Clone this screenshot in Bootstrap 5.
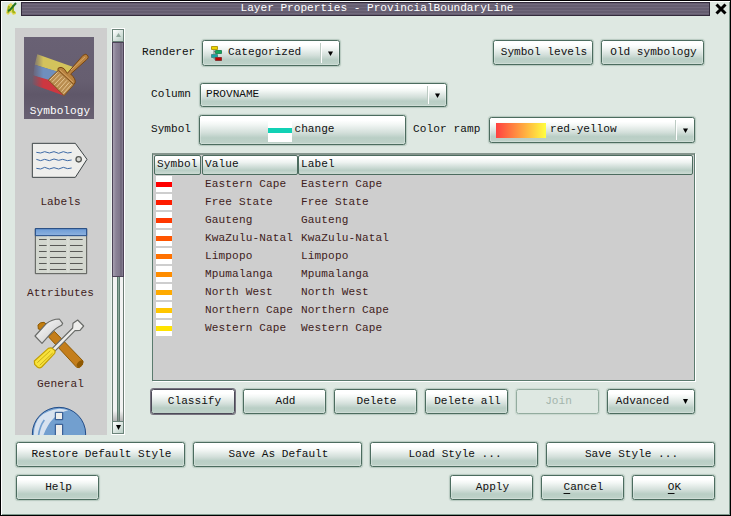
<!DOCTYPE html>
<html lang="en">
<head>
<meta charset="utf-8">
<title>Layer Properties - ProvincialBoundaryLine</title>
<link href="https://cdn.jsdelivr.net/npm/bootstrap@5.3.0/dist/css/bootstrap.min.css" rel="stylesheet">
<style>
body{width:731px;height:516px;overflow:hidden;background:#dee8e2;font:11.1px/14px "Liberation Mono",monospace;color:#101010;white-space:nowrap}
.win{width:731px;height:516px;border:1px solid #000;box-shadow:inset 1px 1px #fff,inset -1px -1px #809b8e}
.titlebar{height:16px;padding:1px 3px 0 4px}
.caption{flex:1;height:14px;margin:0 5px 0 2px;border:1px solid #322a3b;background:repeating-linear-gradient(#655d70 0 1px,#71697c 1px 2px,#655d70 2px 3px);color:#fff;text-align:center;line-height:11px;padding-left:23px}
.main-area{height:407px;margin-top:11px;padding-left:14px}
.side{width:92px;height:407px;background:#cecece;padding:9px 9px 0;gap:9px}
.side-item{flex:none;width:70px;height:82px;color:#401c20;text-align:center}
.side-item svg{display:block;width:70px;height:67px;overflow:hidden}
.side-item.active{background:linear-gradient(#696174,#665e70 55%,#5f5769 70%,#686072);color:#fff}
.side-item span{display:block;width:90px;margin-left:-9px;letter-spacing:.05px}
.side-item:not(.active) span{padding-left:1px}
.scroller{width:14px;height:407px;margin-left:4px;border:1px solid #fff;border-left-color:#eef4f0}
.scroll-btn{width:12px;height:13px;flex:none;border:1px solid #6b8379;background:linear-gradient(135deg,#fff,#b9cec5)}
.scroll-btn svg{display:block;margin:auto}
.thumb{height:235px;flex:none;border:1px solid #4c4357;background:linear-gradient(90deg,#a79fb1,#8b8397 30%,#81788d 65%,#6b6376 80%,#8b8398)}
.trough{flex:1;border:solid #6b7b74;border-width:0 1px;background:linear-gradient(transparent 93%,rgba(120,120,120,.5)),linear-gradient(90deg,#f2f2f2 4px,#5b7b6e 4px 5px,#8da79a 5px 6px,#5b7b6e 6px 7px,#f2f2f2 7px)}
.panel{margin-left:17px;width:575px}
.qbtn,.qbtn:hover{font:inherit;color:#101010;height:25px;padding:0;border:1px solid #4c6c5f;border-radius:2.5px;background:linear-gradient(#fff 0,#fff 15%,#f3f7f5 30%,#d3dfda 60%,#b9cec5 78%,#bfd2c9 100%);box-shadow:0 0 1px 1px rgba(90,125,110,.3),inset 0 0 0 1px rgba(255,255,255,.25);display:flex;align-items:center;justify-content:center;flex:none}
.qbtn>span{margin:-2px 0 0 2px}
.w83{width:83px}
.w169{width:169px}
.qbtn.w169:nth-child(3){width:168px}
.qbtn.focus-btn{width:84px;border-color:#4c4a58;box-shadow:0 0 0 1px #77737f}
.qbtn.focus-btn>span{margin-left:3px}
.qbtn.off{background:none;color:#a3b5ac;border-color:#93ac9f;opacity:1;box-shadow:0 0 1px 1px rgba(90,125,110,.15)}
.combo,.combo:hover{justify-content:flex-start}
.arrow{width:18px;height:calc(100% - 4px);border-left:1px solid #fff;box-shadow:-1px 0 #bccbc3;margin-left:auto;display:flex;align-items:center;justify-content:center}
.r1{height:26px;margin-top:12px}
.r2{height:24px;margin-top:17px;padding-left:9px}
.r3{height:30px;margin-top:8px;padding-left:9px}
.grid-box{width:543px;height:228px;margin:8px 0 0 10px;border:1px solid #5b7b6e;border-top:2px solid #85958d;background:#cecece;box-shadow:1px 1px #fff;color:#401c20}
.heads{color:#101010;height:20px;padding:0 1px}
.th-cell{height:20px;border:1px solid #4c6c5f;border-radius:2px;background:linear-gradient(#fff 10%,#eef3f1 35%,#b9cec5 80%,#cddbd4);padding-left:2px;line-height:16px;letter-spacing:.1px}
.line-row{height:18px;letter-spacing:.12px}
.swatch{width:16px;height:16px;margin:1px 33px 0 2px;background:linear-gradient(#fff 6px,var(--c) 6px 11px,#fff 11px)}
.swatch{margin-left:3px}
.line-row .val{width:96px;line-height:18px}
.actions{margin:8px 0 0 9px}
.foot{padding-left:15px;gap:8px}
u{text-underline-offset:3px}
</style>
<script src="https://cdn.jsdelivr.net/npm/bootstrap@5.3.0/dist/js/bootstrap.bundle.min.js"></script>
</head>
<body>
<div class="win">
<header class="titlebar d-flex">
<svg width="14" height="14" viewBox="0 0 14 14"><path d="M1 11L3 3L6 1L8 3L6 7L11 10V12L8 13L6 10L3 13Z" fill="#e5d957"/><path d="M3 11L4 4M8 3V9Q8 11 10 10" stroke="#9eb51e" stroke-width="2" fill="none"/><path d="M3 9L5 8L11 1" stroke="#267626" stroke-width="2" fill="none"/></svg>
<div class="caption">Layer Properties - ProvincialBoundaryLine</div>
<svg width="12" height="14" viewBox="0 0 12 14"><path d="M1.500 2.500L10.500 11.500M10.500 2.500L1.500 11.500" stroke="#000" stroke-width="3"/></svg>
</header>

<main class="main-area d-flex">
<nav class="side d-flex flex-column overflow-hidden">
<div class="side-item active">
<svg viewBox="0 0 70 67"><defs><linearGradient id="fade"><stop offset="0" stop-color="#fff" stop-opacity="0"/><stop offset=".25" stop-color="#fff"/></linearGradient><mask id="fm"><rect x="95" y="150" width="140" height="150" fill="url(#fade)"/></mask></defs>
<g transform="translate(-24 -37) scale(.33333)"><g mask="url(#fm)"><path d="M112 163L218 200L200 224L104 194Z" fill="#d3c35c"/><path d="M104 194L185 218L150 245L100 226Z" fill="#6f8fbd"/><path d="M98 226L148 240L193 287L96 253Z" fill="#cd3740"/></g>
<path d="M175 204Q183 199 192 206L202 220L249 166Q259 158 264 168Q267 174 260 179L212 222Q229 238 225 249Q222 256 217 253L176 215Q172 209 175 204Z" fill="#b8823f" stroke="#774513" stroke-width="3"/><path d="M175 211L222 254L192 287L145 240Z" fill="#b98d50" stroke="#80501c" stroke-width="3"/><path d="M173 217L149 241M180 223L156 247M187 229L163 254M194 235L170 261M201 241L177 268M208 247L184 275M215 253L190 281" stroke="#e6c693" stroke-width="3"/><path d="M180 210L220 247M213 210L255 171" stroke="#d7a565" stroke-width="3" fill="none"/></g></svg><span>Symbology</span></div>
<div class="side-item">
<svg viewBox="0 0 70 67"><g transform="translate(-24 -3) scale(.33333)" fill="none"><path d="M97 55H226L261 103L226 157H97Z" fill="#eeeeec" stroke="#3c4345" stroke-width="3"/><circle cx="236" cy="103" r="8" stroke="#555753" stroke-width="4" fill="#d8d8d4"/><path d="M109 82L122 84L134 80L148 84L162 80L176 85L190 80L203 84L215 82M109 103L122 107L134 103L148 107L162 102L176 106L188 103L202 107L215 105M109 130L122 132L134 127L148 132L162 128L176 132L190 127L203 131L215 129" stroke="#3c68a5" stroke-width="3" stroke-linejoin="round"/></g></svg><span>Labels</span></div>
<div class="side-item">
<svg viewBox="0 0 70 67"><defs><linearGradient id="hd" x2="0" y2="1"><stop stop-color="#6b9bd6"/><stop offset="1" stop-color="#8eb2df"/></linearGradient></defs><g transform="translate(-24 6) scale(.33333)"><path d="M106 11H260V146H106Z" fill="#d3d7cf" stroke="#555753" stroke-width="3"/><path d="M106 11H260V32H106Z" fill="url(#hd)" stroke="#204a87" stroke-width="3"/><path d="M144 34V144M204 34V144" stroke="#dfe2dc" stroke-width="3"/><path d="M117 43.500h23m10 0h48m12 0h38M117 61.500h23m10 0h48m12 0h38M117 79.500h23m10 0h48m12 0h38M117 97.500h23m10 0h48m12 0h38M117 115.500h23m10 0h48m12 0h38M117 133.500h23m10 0h48m12 0h38" stroke="#555753" stroke-width="3"/></g></svg><span>Attributes</span></div>
<div class="side-item">
<svg viewBox="0 0 70 67"><defs><linearGradient id="hm" x2="1" y2="1"><stop stop-color="#fff"/><stop offset="1" stop-color="#c4c4c4"/></linearGradient></defs><g transform="translate(-24 0) scale(.33333)" stroke-linejoin="round"><path d="M115 57L114 45Q120 36 132 37L143 46L128 60Z" fill="#c17d11" stroke="#8f5902" stroke-width="3"/><path d="M145 80L163 64L249 153Q251 166 238 173L230 172Z" fill="#c47e1b" stroke="#8f5902" stroke-width="3"/><ellipse cx="240" cy="161" rx="7" ry="12" transform="rotate(43 240 161)" fill="#8f5902"/><path d="M105 78L139 41Q156 27 178 27L188 40L185 46Q168 53 150 73L126 100Z" fill="url(#hm)" stroke="#696b68" stroke-width="3.5"/><path d="M156 116L218 54L219 40L233 30L251 48L240 61L225 62L164 124Z" fill="#eeeeec" stroke="#696b68" stroke-width="3.5"/><path d="M103 153L145 115Q155 112 159 117Q168 121 164 130L125 171Q119 176 112 171L104 163Z" fill="#f8e23b" stroke="#c4a000" stroke-width="3.5"/><path d="M112 158L151 122M119 166L158 129" stroke="#c9ae19" stroke-width="3"/></g></svg><span>General</span></div>
<div class="side-item">
<svg viewBox="0 0 70 67"><g transform="translate(-24 -91) scale(.33333)"><circle cx="177" cy="372" r="80" fill="#729fcf" stroke="#204a87" stroke-width="3"/><path d="M102 382Q97 305 178 296Q190 296 205 301Q152 312 128 382Z" fill="#d7e2ef"/><path d="M115 382Q118 350 133 330" stroke="#729fcf" stroke-width="5" fill="none"/><path d="M166 307h22v22h-22ZM166 343h22v80h-22Z" fill="#eeeeec" stroke="#204a87" stroke-width="3"/></g></svg></div>
</nav>
<div class="scroller d-flex flex-column">
<div class="scroll-btn"><svg width="8" height="10" viewBox="0 0 8 10"><path d="M2 7L4.500 3L7 7Z" fill="#91a89d"/></svg></div>
<div class="thumb"></div><div class="trough"></div>
<div class="scroll-btn"><svg width="8" height="10" viewBox="0 0 8 10"><path d="M2 3H7L4.500 8Z" fill="#000"/></svg></div>
</div>

<section class="panel">
<div class="r1 d-flex">
<label style="width:60px;padding-top:5px">Renderer</label>
<button class="btn qbtn combo" style="width:138px;height:26px"><svg width="12" height="16" viewBox="0 0 12 16" style="margin-left:8px"><path d="M3 3V14H8M3 6.500H6" stroke="#777" fill="none"/><path d="M.5 1.500h6v3h-6Z" fill="#edd400" stroke="#b39b13"/><path d="M4.500 5.500h6v3h-6Z" fill="#11a85d" stroke="#278858"/><path d="M.5 9.500h6v3h-6Z" fill="#14a5a5" stroke="#478b8c"/><path d="M4.500 12.500h6v3h-6Z" fill="#c00000" stroke="#863333"/></svg><span style="margin-left:5px">Categorized</span><i class="arrow"><svg width="5" height="5"><path d="M0 .5H5L2.500 5Z"/></svg></i></button>
<button class="btn qbtn" style="width:100px;margin-left:153px"><span>Symbol levels</span></button>
<button class="btn qbtn" style="width:103px;margin-left:8px"><span>Old symbology</span></button>
</div>
<div class="r2 d-flex">
<label style="width:49px;padding-top:4px">Column</label>
<button class="btn qbtn combo" style="width:247px;height:24px"><span style="margin-left:5px">PROVNAME</span><i class="arrow"><svg width="5" height="5"><path d="M0 .5H5L2.500 5Z"/></svg></i></button>
</div>
<div class="r3 d-flex">
<label style="width:48px;padding-top:7px">Symbol</label>
<button class="btn qbtn" style="width:207px;height:30px"><i class="d-block" style="width:24px;height:21px;margin:2px 1px 0 -3px;background:linear-gradient(#fff 7px,#12d1b5 7px 12px,#fff 12px)"></i><span>change</span></button>
<label style="width:76px;margin-left:7px;padding-top:7px;letter-spacing:.1px">Color ramp</label>
<button class="btn qbtn combo" style="width:206px;height:26px;margin-top:2px"><i class="d-block" style="width:50px;height:15px;margin-left:6px;background:linear-gradient(90deg,#ff4141,#ffff41)"></i><span style="margin-left:4px">red-yellow</span><i class="arrow"><svg width="5" height="5"><path d="M0 .5H5L2.500 5Z"/></svg></i></button>
</div>
<div class="grid-box">
<div class="heads d-flex"><div class="th-cell" style="width:47px">Symbol</div><div class="th-cell" style="width:96px;margin-left:1px">Value</div><div class="th-cell flex-fill">Label</div></div>
<div class="line-row d-flex"><i class="swatch" style="--c:#f00"></i><span class="val">Eastern Cape</span><span class="val">Eastern Cape</span></div>
<div class="line-row d-flex"><i class="swatch" style="--c:#ff1c00"></i><span class="val">Free State</span><span class="val">Free State</span></div>
<div class="line-row d-flex"><i class="swatch" style="--c:#ff3800"></i><span class="val">Gauteng</span><span class="val">Gauteng</span></div>
<div class="line-row d-flex"><i class="swatch" style="--c:#ff5500"></i><span class="val">KwaZulu-Natal</span><span class="val">KwaZulu-Natal</span></div>
<div class="line-row d-flex"><i class="swatch" style="--c:#ff7100"></i><span class="val">Limpopo</span><span class="val">Limpopo</span></div>
<div class="line-row d-flex"><i class="swatch" style="--c:#ff8d00"></i><span class="val">Mpumalanga</span><span class="val">Mpumalanga</span></div>
<div class="line-row d-flex"><i class="swatch" style="--c:#ffaa00"></i><span class="val">North West</span><span class="val">North West</span></div>
<div class="line-row d-flex"><i class="swatch" style="--c:#ffc600"></i><span class="val">Northern Cape</span><span class="val">Northern Cape</span></div>
<div class="line-row d-flex"><i class="swatch" style="--c:#ffe300"></i><span class="val">Western Cape</span><span class="val">Western Cape</span></div>
</div>
<div class="actions d-flex gap-2">
<button class="btn qbtn focus-btn"><span>Classify</span></button>
<button class="btn qbtn w83"><span>Add</span></button>
<button class="btn qbtn w83"><span>Delete</span></button>
<button class="btn qbtn w83"><span>Delete all</span></button>
<button class="btn qbtn w83 off" disabled><span>Join</span></button>
<button class="btn qbtn" style="width:88px"><span>Advanced</span><svg width="5" height="5" style="margin-left:14px"><path d="M0 0H5L2.500 5Z"/></svg></button>
</div>
</section>
</main>

<div class="foot d-flex" style="margin-top:7px">
<button class="btn qbtn w169"><span>Restore Default Style</span></button>
<button class="btn qbtn w169"><span>Save As Default</span></button>
<button class="btn qbtn w169"><span>Load Style ...</span></button>
<button class="btn qbtn w169"><span>Save Style ...</span></button>
</div>
<footer class="foot d-flex" style="margin-top:8px">
<button class="btn qbtn w83"><span>Help</span></button>
<button class="btn qbtn w83" style="margin-left:343px"><span>Apply</span></button>
<button class="btn qbtn w83"><span><u>C</u>ancel</span></button>
<button class="btn qbtn w83"><span><u>O</u>K</span></button>
</footer>
</div>
</body>
</html>
